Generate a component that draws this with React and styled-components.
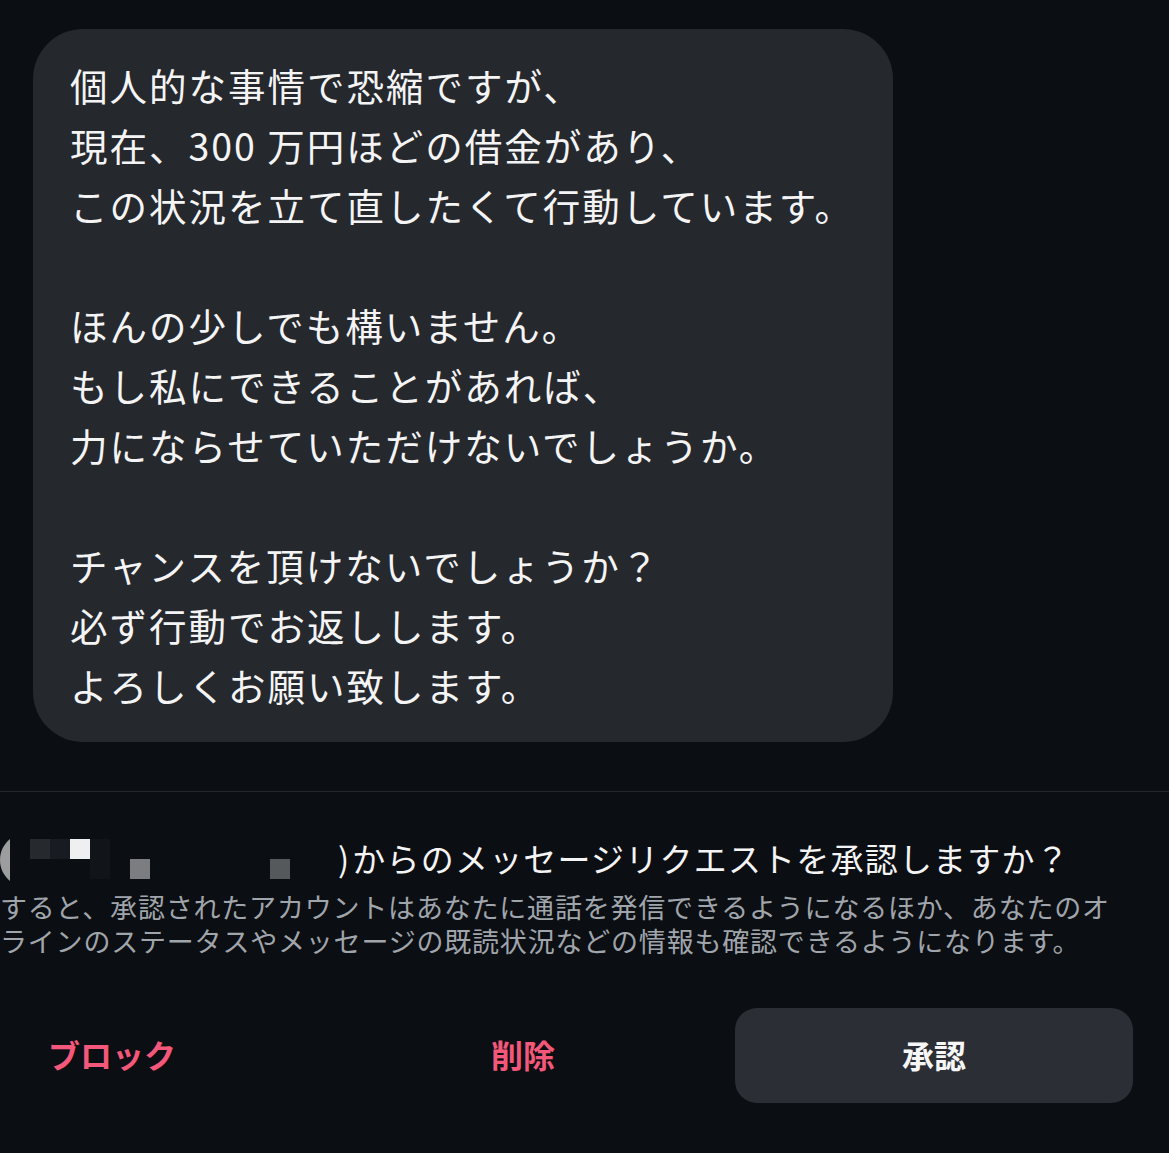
import React from 'react'
import styled, { createGlobalStyle } from 'styled-components'

const GlobalStyle = createGlobalStyle`
    html, body {
        margin: 0;
        padding: 0;
        background: #0b0e12;
    }
    body {
        font-family: "Noto Sans CJK JP", "Noto Sans", sans-serif;
        color: #f2f3f4;
        overflow-x: hidden;
    }
`

const Screen = styled.div`
    width: 1169px;
    min-height: 1153px;
    background: #0b0e12;
    overflow: hidden;
    padding-top: 29px;
    box-sizing: border-box;
`

const Bubble = styled.div`
    margin-left: 33px;
    width: 860px;
    box-sizing: border-box;
    background: #25282d;
    border-radius: 50px;
    padding: 26px 30px 27px 37px;
`

const MessageLine = styled.div`
    font-size: 37.5px;
    letter-spacing: 2px;
    line-height: 60px;
    height: 60px;
    white-space: nowrap;
    color: #f4f4f5;
`

const Divider = styled.div`
    margin-top: 49px;
    height: 1px;
    background: #24272b;
`

const Request = styled.div`
    padding-top: 46px;
`

const RequestTitle = styled.div`
    display: flex;
    align-items: center;
    height: 40px;
    font-size: 33px;
    letter-spacing: 1.2px;
    line-height: 40px;
    white-space: nowrap;
    color: #f4f4f5;
`

const Mosaic = styled.svg`
    flex: none;
    margin-top: 4px;
`

const Paren = styled.span`
    margin-left: 46px;
    margin-right: 2px;
`

const Description = styled.div`
    margin-top: 12px;
    font-size: 27px;
    letter-spacing: 0.8px;
    line-height: 34px;
    color: #a0a5ac;
    white-space: nowrap;
`

const Actions = styled.div`
    display: grid;
    grid-template-columns: repeat(3, 398px);
    gap: 13px;
    margin: 50px 0 0 -87px;
`

const ActionButton = styled.button`
    height: 95px;
    padding: 0 0 4px;
    border: none;
    border-radius: 22px;
    background: ${p => (p.$primary ? '#2b2e34' : 'transparent')};
    color: ${p => (p.$danger ? '#f3587b' : '#f6f6f7')};
    font-family: "Noto Sans CJK JP", sans-serif;
    font-size: 32px;
    font-weight: 700;
    cursor: pointer;
`

const message = [
    '個人的な事情で恐縮ですが、',
    '現在、300 万円ほどの借金があり、',
    'この状況を立て直したくて行動しています。',
    '',
    'ほんの少しでも構いません。',
    'もし私にできることがあれば、',
    '力にならせていただけないでしょうか。',
    '',
    'チャンスを頂けないでしょうか？',
    '必ず行動でお返しします。',
    'よろしくお願い致します。',
]

// pixelated (censored) account name
const blocks = [
    { x: 30, y: 0, w: 20, h: 20, c: '#26292d' },
    { x: 50, y: 0, w: 20, h: 20, c: '#181b22' },
    { x: 70, y: 0, w: 20, h: 20, c: '#eeeff0' },
    { x: 90, y: 0, w: 20, h: 40, c: '#111419' },
    { x: 130, y: 20, w: 20, h: 20, c: '#7b7d80' },
    { x: 270, y: 20, w: 20, h: 20, c: '#55595c' },
]

const CensoredName = () => (
    <Mosaic width="292" height="42" viewBox="0 0 292 42">
        <path d="M10 0 C3 6 0 13 0 21 C0 29 3 36 10 42 Z" fill="#9b9d9f" />
        {blocks.map((b, i) => (
            <rect key={i} x={b.x} y={b.y} width={b.w} height={b.h} fill={b.c} />
        ))}
    </Mosaic>
)

class App extends React.Component {
    render() {
        return (
            <Screen>
                <GlobalStyle />
                <Bubble>
                    {message.map((line, i) => (
                        <MessageLine key={i}>{line}</MessageLine>
                    ))}
                </Bubble>
                <Divider />
                <Request>
                    <RequestTitle>
                        <CensoredName />
                        <Paren>)</Paren>
                        からのメッセージリクエストを承認しますか？
                    </RequestTitle>
                    <Description>
                        <div>すると、承認されたアカウントはあなたに通話を発信できるようになるほか、あなたのオ</div>
                        <div>ラインのステータスやメッセージの既読状況などの情報も確認できるようになります。</div>
                    </Description>
                </Request>
                <Actions>
                    <ActionButton $danger>ブロック</ActionButton>
                    <ActionButton $danger>削除</ActionButton>
                    <ActionButton $primary>承認</ActionButton>
                </Actions>
            </Screen>
        )
    }
}

export default App
